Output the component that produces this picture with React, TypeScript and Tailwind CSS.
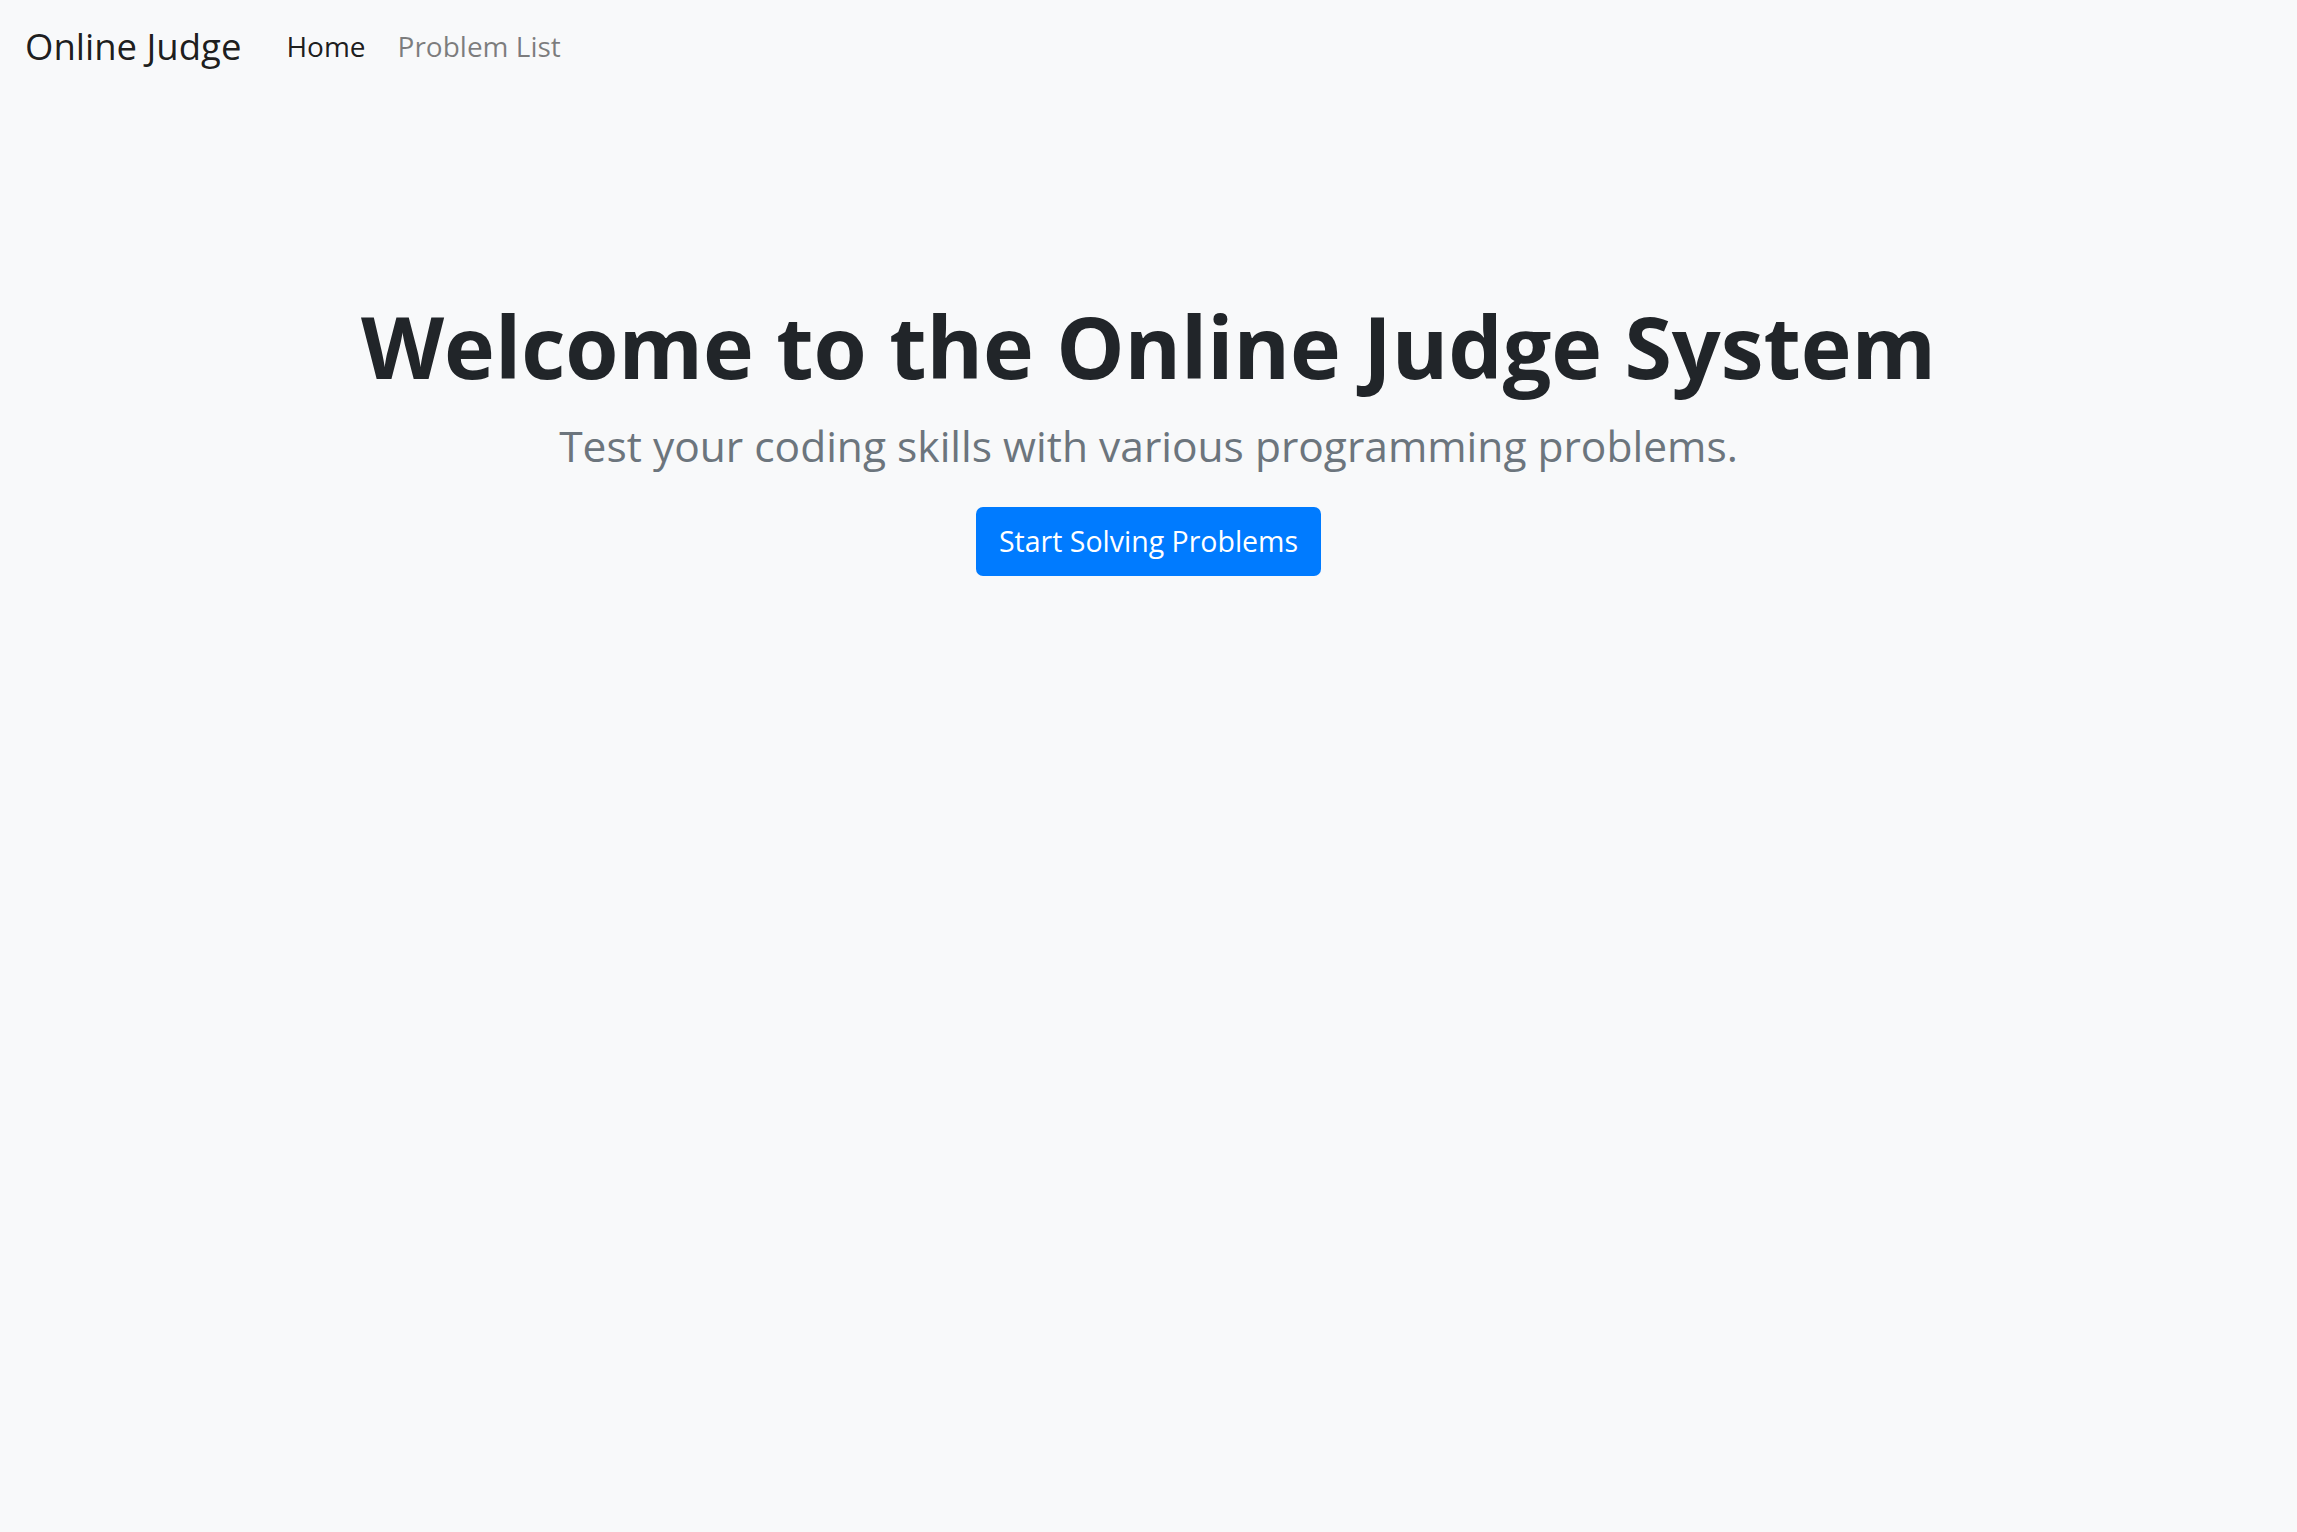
const App = () => {
  return (
    <div className="min-h-screen bg-[#f8f9fa] font-['Open_Sans',_'Noto_Sans',_sans-serif] text-[#212529]">
      <nav className="flex items-center px-[25px] pt-[19px] pb-[19px]">
        <a href="#" className="mr-[29px] text-[36.5px] leading-[54px] text-black/90">Online Judge</a>
        <ul className="flex items-center">
          <li><a href="#" className="block px-[16px] text-[28px] leading-[42px] text-black/90">Home</a></li>
          <li><a href="#" className="block px-[16px] text-[28px] leading-[42px] text-black/50">Problem List</a></li>
        </ul>
      </nav>
      <main className="mt-[204px] text-center">
        <h1 className="text-[86px] font-bold leading-[100px]">Welcome to the Online Judge System</h1>
        <p className="mt-[20px] text-[42.5px] leading-[60px] text-[#6c757d]">Test your coding skills with various programming problems.</p>
        <div className="mt-[31px] flex justify-center">
          <a href="#" className="block rounded-[7px] bg-[#007bff] px-[23px] py-[12px] text-[28.5px] leading-[45px] text-white">Start Solving Problems</a>
        </div>
      </main>
    </div>
  );
};

export default App;
